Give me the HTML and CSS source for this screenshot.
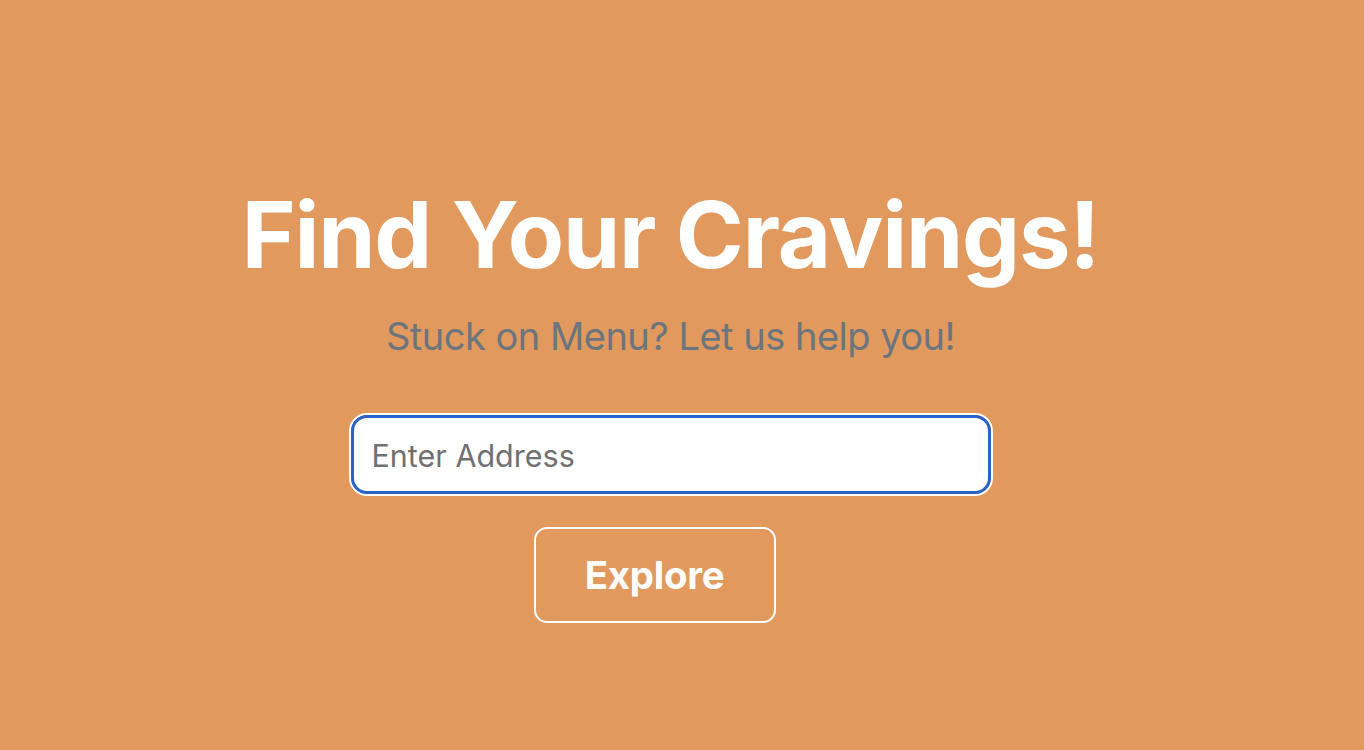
FILE: index.html
```html
<!DOCTYPE html>
<html>
<head>
<meta charset="utf-8">
<link rel="stylesheet" href="styles.css">
</head>
<body>
<main class="hero">
  <h1 class="title">Find Your Cravings!</h1>
  <p class="lead">Stuck on Menu? Let us help you!</p>
  <div class="field"><input class="address" type="text" placeholder="Enter Address"></div>
  <button class="explore">Explore</button>
</main>
</body>
</html>
```
FILE: styles.css
```css
html, body { margin: 0; padding: 0; }
body {
  background: #e1995e;
  font-family: Inter, "Noto Sans", sans-serif;
  height: 750px;
}
.hero {
  display: flex;
  flex-direction: column;
  align-items: center;
  padding-top: 180px;
  padding-right: 23px;
}
.title {
  margin: 0;
  color: #fff;
  font-size: 92px;
  font-weight: 700;
  line-height: 1.2;
  letter-spacing: -1.2px;
}
.lead {
  margin: 24px 0 0;
  color: #6c757d;
  font-size: 38px;
  line-height: 1.2;
  letter-spacing: -0.5px;
}
.field {
  margin-top: 53px;
  width: 640px;
  height: 79px;
  border: 2px solid #fff;
  border-radius: 18px;
  box-sizing: content-box;
}
.address {
  box-sizing: border-box;
  width: 100%;
  height: 100%;
  border: 3px solid #2962c9;
  border-radius: 16px;
  outline: none;
  padding: 2px 18px 0;
  font-family: inherit;
  font-size: 30.5px;
  color: #333;
  background: #fff;
}
.address::placeholder { color: #707070; }
.explore {
  margin-top: 31px;
  margin-right: 32px;
  width: 242px;
  height: 96px;
  box-sizing: border-box;
  background: transparent;
  border: 2px solid #fff;
  border-radius: 13px;
  color: #fff;
  font-family: inherit;
  font-size: 38.5px;
  font-weight: 700;
  letter-spacing: -0.3px;
}
```
